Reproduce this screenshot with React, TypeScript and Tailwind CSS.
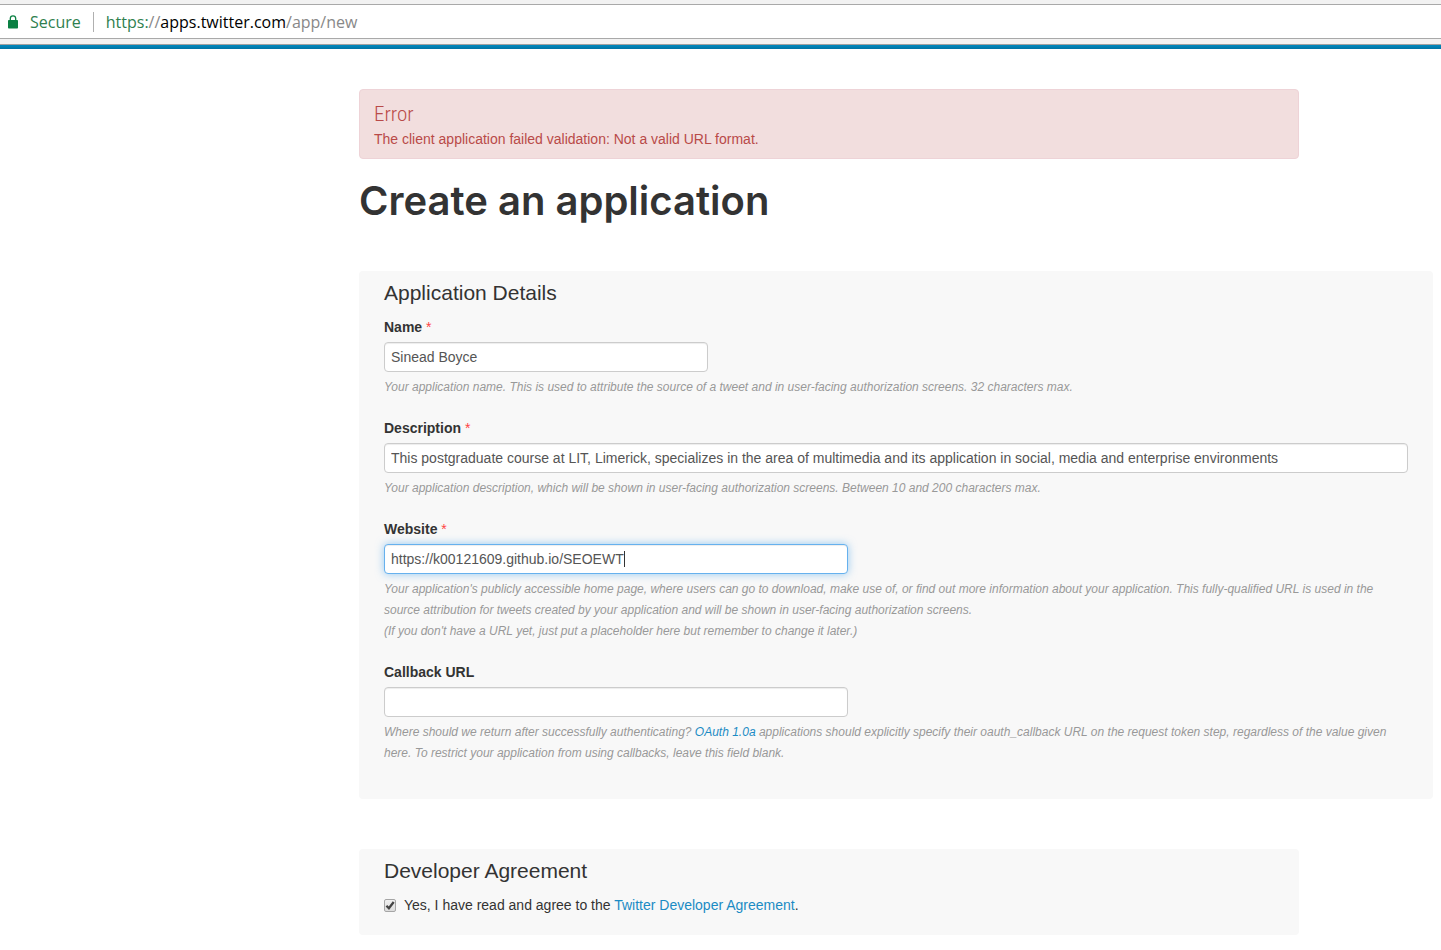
import { useState } from "react";
import type { ReactNode } from "react";

const inputBase =
  "block h-[30px] w-full rounded-[4px] border bg-white px-1.5 text-sm text-[#555555] outline-none";
const inputIdle = "border-[#cccccc] shadow-[inset_0_1px_1px_rgba(0,0,0,0.075)]";
const inputActive =
  "border-[#66b1ee] shadow-[inset_0_1px_1px_rgba(0,0,0,0.075),0_0_8px_rgba(82,168,236,0.6)]";

type FieldProps = {
  id: string;
  label: string;
  required?: boolean;
  width: string;
  initial: string;
  active?: boolean;
  children: ReactNode;
};

function Field({ id, label, required, width, initial, active, children }: FieldProps) {
  const [value, setValue] = useState(initial);
  return (
    <div>
      <label htmlFor={id} className="mb-1 block text-sm leading-[21px] font-bold">
        {label}
        {required && <span className="font-normal text-[#ff4444]"> *</span>}
      </label>
      <div className={`relative ${width}`}>
        <input
          id={id}
          type="text"
          required={required}
          aria-describedby={`${id}-hint`}
          value={value}
          onChange={(e) => setValue(e.target.value)}
          className={`${inputBase} ${active ? inputActive : inputIdle}`}
        />
        {active && (
          <div
            aria-hidden="true"
            className="pointer-events-none absolute inset-y-0 left-0 flex items-center pl-[7px] text-sm"
          >
            <span className="invisible">{value}</span>
            <span className="h-4 w-px bg-[#333333]" />
          </div>
        )}
      </div>
      <div id={`${id}-hint`} className="mt-[5px] text-xs leading-[21px] text-[#999999] italic">
        {children}
      </div>
    </div>
  );
}

function AddressBar() {
  return (
    <header className="border-b border-[#a0a0a0] bg-[#f2f2f2] pt-1 pb-[5px]">
      <div className="flex h-[35px] items-center border-y border-[#a9a9a9] bg-white pl-2 font-['Open_Sans','Noto_Sans',sans-serif] text-base leading-6">
        <svg viewBox="0 0 10 14" className="h-[14px] w-[10px]" aria-hidden="true">
          <path d="M2.3 6V3.6a2.7 2.7 0 0 1 5.4 0V6" fill="none" stroke="#0b8043" strokeWidth="1.3" />
          <rect x="0" y="5" width="10" height="8.6" rx="0.8" fill="#0b8043" />
        </svg>
        <span className="ml-3 text-[#2f7f4f]">Secure</span>
        <span className="mx-3 h-5 w-px bg-[#b0b0b0]" />
        <span className="text-[#888888]">
          <span className="text-[#2f7f4f]">https:</span>//
          <span className="text-black">apps.twitter.com</span>/app/new
        </span>
      </div>
    </header>
  );
}

export default function App() {
  const [agreed, setAgreed] = useState(true);
  return (
    <div className="bg-white pb-[15px] font-['Liberation_Sans',Arial,sans-serif] text-sm text-[#333333]">
      <AddressBar />
      <div className="h-1 bg-linear-to-b from-[#0089be] to-[#0073a3]" />

      <main className="pt-10 pr-2 pl-[359px]">
        <div
          role="alert"
          className="max-w-[940px] rounded-[4px] border border-[#eed3d7] bg-[#f2dede] px-[14px] pt-[11px] pb-2 text-[#b94a48]"
        >
          <h2 className="mb-px font-['Roboto_Condensed','Liberation_Sans_Narrow',Roboto,sans-serif] text-[21px] leading-[27px] font-light">
            Error
          </h2>
          <p className="leading-[21px]">
            The client application failed validation: Not a valid URL format.
          </p>
        </div>

        <h1 className="mt-[18px] mb-[46px] font-['Inter',sans-serif] text-[40px] leading-[48px] font-semibold">
          Create an application
        </h1>

        <form onSubmit={(e) => e.preventDefault()}>
          <section className="rounded-[4px] bg-[#f8f8f8] px-[25px] pt-2 pb-[35px]">
            <h2 className="mb-[10px] text-[21px] leading-7">Application Details</h2>
            <div className="flex flex-col gap-5">
              <Field
                id="name"
                label="Name"
                required
                width="max-w-[324px]"
                initial="Sinead Boyce"
              >
                Your application name. This is used to attribute the source of a tweet and in
                user-facing authorization screens. 32 characters max.
              </Field>
              <Field
                id="description"
                label="Description"
                required
                width="w-full"
                initial="This postgraduate course at LIT, Limerick, specializes in the area of multimedia and its application in social, media and enterprise environments"
              >
                Your application description, which will be shown in user-facing authorization
                screens. Between 10 and 200 characters max.
              </Field>
              <Field
                id="website"
                label="Website"
                required
                active
                width="max-w-[464px]"
                initial="https://k00121609.github.io/SEOEWT"
              >
                Your application's publicly accessible home page, where users can go to download,
                make use of, or find out more information about your application. This
                fully-qualified URL is used in the source attribution for tweets created by your
                application and will be shown in user-facing authorization screens.
                <br />
                (If you don't have a URL yet, just put a placeholder here but remember to change it
                later.)
              </Field>
              <Field id="callback" label="Callback URL" width="max-w-[464px]" initial="">
                Where should we return after successfully authenticating?{" "}
                <a href="#oauth" className="text-[#1b8bc4]">
                  OAuth 1.0a
                </a>{" "}
                applications should explicitly specify their oauth_callback URL on the request
                token step, regardless of the value given here. To restrict your application from
                using callbacks, leave this field blank.
              </Field>
            </div>
          </section>

          <section className="mt-[50px] max-w-[940px] rounded-[4px] bg-[#f8f8f8] px-[25px] pt-2 pb-[19px]">
            <h2 className="mb-[10px] text-[21px] leading-7">Developer Agreement</h2>
            <div className="flex items-center gap-2 leading-[21px]">
              <span className="relative flex">
                <input
                  id="agree"
                  type="checkbox"
                  checked={agreed}
                  onChange={(e) => setAgreed(e.target.checked)}
                  className="h-[13px] w-3 appearance-none rounded-[2px] border border-[#a6a6a6] bg-linear-to-b from-[#f0f0f0] to-[#dcdcdc]"
                />
                {agreed && (
                  <svg
                    viewBox="0 0 12 13"
                    className="pointer-events-none absolute inset-0 h-[13px] w-3"
                    aria-hidden="true"
                  >
                    <path d="M2.4 6.8l2.5 2.5L9.7 3" fill="none" stroke="#444444" strokeWidth="2.3" />
                  </svg>
                )}
              </span>
              <label htmlFor="agree">
                Yes, I have read and agree to the{" "}
                <a href="#agreement" className="text-[#1b8bc4]">
                  Twitter Developer Agreement
                </a>
                .
              </label>
            </div>
          </section>
        </form>
      </main>
    </div>
  );
}
